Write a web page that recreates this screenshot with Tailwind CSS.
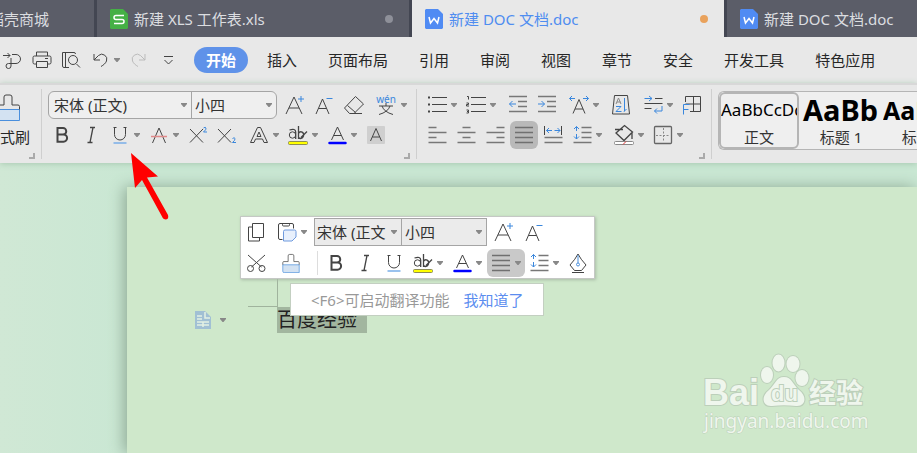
<!DOCTYPE html>
<html lang="zh-CN">
<head>
  <meta charset="UTF-8" />
  <meta name="viewport" content="width=device-width, initial-scale=1.0"/>
  <title>新建 DOC 文档.doc</title>
  <script src="https://cdn.jsdelivr.net/npm/@tailwindcss/browser@4"></script>
</head>
<body class="flex flex-col min-h-screen overflow-hidden bg-[#cbe8d3] font-['Noto_Sans','Noto_Sans_CJK_SC',sans-serif] text-[15px] leading-5 text-[#333] whitespace-nowrap">

  <!-- Icon set, all on a 28x28 grid -->
  <svg class="hidden" fill="none">
    <symbol id="down" viewBox="0 0 6 4"><path d="M0 0h6v1L3.500 4h-1L0 1z" fill="#888"/></symbol>
    <symbol id="export" viewBox="0 0 28 28"><path d="M4 9.500h7M8.500 7l2.500 2.500L8.500 12M13 8.500h4a4.500 4.500 0 0 1 0 9H9.500a2.500 2.500 0 1 0 2.500 2.500v-8"/></symbol>
    <symbol id="print" viewBox="0 0 28 28"><path d="M8.500 10V6h11v4M8.500 18H6.500a1.500 1.500 0 0 1-1.500-1.500v-5A1.500 1.500 0 0 1 6.500 10h15a1.500 1.500 0 0 1 1.500 1.500v5a1.500 1.500 0 0 1-1.500 1.500h-2M8.500 15.500h11v6h-11zM17 12.500h3"/></symbol>
    <symbol id="preview" viewBox="0 0 28 28"><path d="M12 21.500H7A1.500 1.500 0 0 1 5.500 20V6.500H17A1.500 1.500 0 0 1 18.500 8M8.500 6.500v15M19.500 18l3.500 3.500"/><circle cx="16" cy="14" r="4.500"/></symbol>
    <symbol id="undo" viewBox="0 0 28 28"><path d="M8 8v6h6M8 14l4.500-4.500a5 5 0 0 1 8 5.500c-1 2.500-3 4-5.500 5.500"/></symbol>
    <symbol id="redo" viewBox="0 0 28 28"><path d="M20 8v6h-6M20 14l-4.500-4.500a5 5 0 0 0-8 5.500c1 2.500 3 4 5.500 5.500"/></symbol>
    <symbol id="more" viewBox="0 0 28 28"><path d="M10 10.500h9M10.500 14l4 4 4-4"/></symbol>
    <symbol id="brush" viewBox="0 0 28 28"><path d="M2.500 16.500h23v11h-21q-2 0-2-2z" fill="#d3e2f2" stroke="#4a8fdd"/><path d="M2.500 16.500v-3q0-1.500 1.500-1.500h6V4q0-2 2-2h4q2 0 2 2v8h6q1.500 0 1.500 1.500v3"/></symbol>
    <symbol id="grow" viewBox="0 0 28 28"><path d="M6 23L14 6 22 23M9 17h10"/><path d="M18 8h6M21 5v6" stroke="#3a87dd"/></symbol>
    <symbol id="shrink" viewBox="0 0 28 28"><path d="M6 23L12.500 8 19 23M8.500 17.500h8"/><path d="M16.500 7.500h6" stroke="#3a87dd"/></symbol>
    <symbol id="eraser" viewBox="0 0 28 28"><path d="M9.500 22.500L4.500 17 15.500 5.500l8 7.500-9.500 9.500M7.500 14.500l8 7M9.500 22.500H22"/></symbol>
    <symbol id="alignleft" viewBox="0 0 28 28"><path d="M5.500 6.500h8M5.500 11.500h18M5.500 16.500h8M5.500 21.500h18" stroke="#777" stroke-width="1.500"/></symbol>
    <symbol id="aligncenter" viewBox="0 0 28 28"><path d="M10.500 6.500h8M5.500 11.500h18M10.500 16.500h8M5.500 21.500h18" stroke="#777" stroke-width="1.500"/></symbol>
    <symbol id="alignright" viewBox="0 0 28 28"><path d="M15.500 6.500h8M5.500 11.500h18M15.500 16.500h8M5.500 21.500h18" stroke="#777" stroke-width="1.500"/></symbol>
    <symbol id="justify" viewBox="0 0 28 28"><path d="M5 6.500h18M5 11.500h18M5 16.500h18M5 21.500h18" stroke="#707070" stroke-width="1.500"/></symbol>
    <symbol id="distribute" viewBox="0 0 28 28"><path d="M5.500 5v9M22.500 5v9"/><path d="M5.500 16.500h18M5.500 21.500h18" stroke="#777" stroke-width="1.500"/><path d="M13 9.500H7.500M10 7L7.500 9.500 10 12M15.500 9.500H21M18.500 7L21 9.500 18.500 12" stroke="#3a87dd"/></symbol>
    <symbol id="spacing" viewBox="0 0 28 28"><path d="M13.500 6.500h10M13.500 11.500h10M13.500 16.500h10M5.500 21.500h18" stroke="#777" stroke-width="1.500"/><path d="M8.500 5.500V10M6 8l2.500-2.500L11 8M8.500 13v5M6 15.500L8.500 18l2.500-2.500" stroke="#3a87dd"/></symbol>
    <symbol id="bold" viewBox="0 0 28 28"><path d="M9.500 7h5.500a3.200 3.200 0 0 1 0 6.500H9.500zM9.500 13.500h6a3.600 3.600 0 0 1 0 7.200h-6z" stroke="#444" stroke-width="2"/></symbol>
    <symbol id="italic" viewBox="0 0 28 28"><path d="M13 6.500h5M10.500 21.500h5M16 6.500l-3 15" stroke-width="1.300"/></symbol>
    <symbol id="under" viewBox="0 0 28 28"><path d="M7.500 6.500h3M17.500 6.500h3M8.500 6.500v7a5.500 5.500 0 0 0 11 0v-7"/><path d="M7.500 22h13" stroke="#78aee8" stroke-width="1.500"/></symbol>
    <symbol id="mark" viewBox="0 0 28 28"><rect x="4.500" y="20.500" width="19" height="3" rx="1" fill="#ff0" stroke="#8d8d55"/><circle cx="8.500" cy="14" r="3.200"/><path d="M5.500 9q6-2 6.200 2v7M14.500 5v13M14.500 12.500c2-3.500 6-1 5 2.500-1 3-3.500 3-5 1.500M17 16.500l6-6" stroke-width="1.300"/></symbol>
    <symbol id="color" viewBox="0 0 28 28"><path d="M8.500 19L14.500 6l6 13M11 14.500h7"/><path d="M6.500 22h16" stroke="#00f" stroke-width="2.500" stroke-linecap="round"/></symbol>
  </svg>

  <!-- Document tabs -->
  <nav class="flex h-[37px] shrink-0 bg-[#5b5d68] text-[#dcdde0]">
    <button class="flex w-[94px] shrink-0 items-center justify-end pr-[45px]">稻壳商城</button>
    <button class="flex w-[315px] shrink-0 items-center gap-1.5 border-l-[3px] border-[#434652] pl-[13px] pr-4">
      <svg class="w-[18px] h-5" viewBox="0 0 18 20" fill="none"><path d="M1 0h12l5 5v14l-1 1H1l-1-1V1z" fill="#45b045"/><path d="M14 6.500H6A1.800 1.800 0 0 0 6 10.500h6a1.800 1.800 0 0 1 0 4H4" stroke="#fff" stroke-width="1.500"/></svg>
      新建 XLS 工作表.xls
      <span class="ml-auto size-2 rounded-full bg-[#8e9099]"></span>
    </button>
    <button class="flex w-[315px] shrink-0 items-center gap-1.5 border-l-[3px] border-[#434652] bg-[#e8e8e8] pl-[13px] pr-4 text-[#4f8df0]">
      <svg class="w-[18px] h-5" viewBox="0 0 18 20" fill="none"><path d="M1 0h12l5 5v14l-1 1H1l-1-1V1z" fill="#508bf3"/><path d="M4 8l1.500 6L9 9.500l3.500 4.500L14 8" stroke="#fff" stroke-width="1.500"/></svg>
      新建 DOC 文档.doc
      <span class="ml-auto size-2 rounded-full bg-[#e9a25c]"></span>
    </button>
    <button class="flex min-w-0 flex-1 items-center gap-1.5 border-l-[3px] border-[#434652] pl-[13px]">
      <svg class="w-[18px] h-5" viewBox="0 0 18 20" fill="none"><path d="M1 0h12l5 5v14l-1 1H1l-1-1V1z" fill="#508bf3"/><path d="M4 8l1.500 6L9 9.500l3.500 4.500L14 8" stroke="#fff" stroke-width="1.500"/></svg>
      新建 DOC 文档.doc
    </button>
  </nav>

  <!-- Quick access + menu -->
  <div class="flex h-[46px] shrink-0 items-center bg-[#e8e8e8] stroke-[#444]">
    <div class="-ml-px mr-[11px] flex shrink-0 items-center">
      <button title="输出" class="w-[29px]"><svg class="size-7 fill-none"><use href="#export"/></svg></button>
      <button title="打印" class="w-[29px]"><svg class="size-7 fill-none"><use href="#print"/></svg></button>
      <button title="打印预览" class="w-[29px]"><svg class="size-7 fill-none"><use href="#preview"/></svg></button>
      <button title="撤销" class="flex w-[39px] items-center"><svg class="size-7 fill-none"><use href="#undo"/></svg><svg class="w-1.5 h-1 stroke-none"><use href="#down"/></svg></button>
      <button title="恢复" class="w-[29px]"><svg class="size-7 fill-none stroke-[#bbb]"><use href="#redo"/></svg></button>
      <button title="更多" class="w-[29px]"><svg class="size-7 fill-none"><use href="#more"/></svg></button>
    </div>
    <button class="h-[26px] w-[54px] shrink-0 rounded-full bg-[#5f92e9] font-bold text-white">开始</button>
    <div class="ml-[19px] flex gap-[31px] text-[#262626]">
      <button>插入</button>
      <button>页面布局</button>
      <button>引用</button>
      <button>审阅</button>
      <button>视图</button>
      <button>章节</button>
      <button>安全</button>
      <button>开发工具</button>
      <button>特色应用</button>
    </div>
  </div>

  <!-- Ribbon -->
  <div class="relative z-10 flex h-20 shrink-0 border-t-2 border-[#d8d8d8] bg-[#e8e8e8] stroke-[#444] shadow-[0_1px_6px_#a9c9b2]">
    <div class="relative w-[41px] shrink-0 pt-2">
      <button class="flex w-[30px] flex-col items-end gap-1.5 text-[#262626]">
        <svg class="mr-2 size-7 fill-none"><use href="#brush"/></svg>
        格式刷
      </button>
      <span class="absolute bottom-1 right-1.5 size-1.5 border-b-2 border-r-2 border-[#aaa]"></span>
    </div>
    <div class="my-1 w-px bg-[#cfcfcf]"></div>

    <div class="relative flex w-[374px] shrink-0 flex-col gap-0.5 pl-1.5 pt-1.5">
      <div class="flex h-7 items-center">
        <div class="mr-[3px] flex h-7 w-[229px] rounded-md border border-[#a5a5a5] bg-[#efefef]">
          <label class="relative flex w-[143px] items-center border-r border-[#a5a5a5]">
            <select aria-label="字体" class="w-full appearance-none pl-[5px] outline-none"><option>宋体 (正文)</option></select>
            <svg class="absolute right-1 w-1.5 h-1 stroke-none"><use href="#down"/></svg>
          </label>
          <label class="relative flex flex-1 items-center">
            <select aria-label="字号" class="w-full appearance-none pl-[3px] outline-none"><option>小四</option></select>
            <svg class="absolute right-1 w-1.5 h-1 stroke-none"><use href="#down"/></svg>
          </label>
        </div>
        <button title="增大字号" class="w-[30px]"><svg class="size-7 fill-none"><use href="#grow"/></svg></button>
        <button title="减小字号" class="w-[30px]"><svg class="size-7 fill-none"><use href="#shrink"/></svg></button>
        <button title="清除格式" class="w-[31px]"><svg class="size-7 fill-none"><use href="#eraser"/></svg></button>
        <button title="拼音指南" class="flex w-[39px] items-center">
          <span class="flex w-[30px] flex-col items-center text-[10px] leading-[8px] text-[#3a87dd]">wén<svg class="w-4 h-3 fill-none stroke-[#444]" viewBox="0 0 16 12"><path d="M8 0v3M1 3h14M4 3q2 6 11 8.500M12 3q-2 6-11 8.500"/></svg></span>
          <svg class="w-1.5 h-1 stroke-none"><use href="#down"/></svg>
        </button>
      </div>
      <div class="flex h-7 items-center gap-[3px]">
        <div class="flex">
          <button title="加粗" class="w-[29px]"><svg class="size-7 fill-none"><use href="#bold"/></svg></button>
          <button title="倾斜" class="w-[29px]"><svg class="size-7 fill-none"><use href="#italic"/></svg></button>
          <button title="下划线" class="flex w-[39px] items-center"><svg class="size-7 fill-none"><use href="#under"/></svg><svg class="w-1.5 h-1 stroke-none"><use href="#down"/></svg></button>
          <button title="删除线" class="flex w-[39px] items-center"><svg class="size-7 fill-none" viewBox="0 0 28 28"><path d="M7.500 22L14 7l6.500 15"/><path d="M6 15.500h16" stroke="#e08a8a" stroke-width="1.500"/></svg><svg class="w-1.5 h-1 stroke-none"><use href="#down"/></svg></button>
          <button title="上标" class="w-[29px]"><svg class="size-7 fill-none" viewBox="0 0 28 28"><path d="M6 8l13 13.500M19 8L6 21.500"/><path d="M19.500 7q2-1.500 2.500 0t-2.500 4h3.500" stroke="#3a87dd"/></svg></button>
          <button title="下标" class="w-[29px]"><svg class="size-7 fill-none" viewBox="0 0 28 28"><path d="M5 8l13 13.500M18 8L5 21.500"/><path d="M19.500 17.500q2-1.500 2.500 0t-2.500 4H23" stroke="#3a87dd"/></svg></button>
        </div>
        <div class="flex">
          <button title="文字效果" class="flex w-[39px] items-center"><svg class="size-7 fill-none" viewBox="0 0 28 28"><path d="M5.500 21.500L12.500 6.500h3l7 15h-3.500l-1.500-3.500h-7L9 21.500zM14 11l-2 4.500h4z"/></svg><svg class="w-1.5 h-1 stroke-none"><use href="#down"/></svg></button>
          <button title="突出显示" class="flex w-[39px] items-center"><svg class="size-7 fill-none"><use href="#mark"/></svg><svg class="w-1.5 h-1 stroke-none"><use href="#down"/></svg></button>
          <button title="字体颜色" class="flex w-[39px] items-center"><svg class="size-7 fill-none"><use href="#color"/></svg><svg class="w-1.5 h-1 stroke-none"><use href="#down"/></svg></button>
          <button title="字符底纹" class="w-[29px]"><svg class="size-7 fill-none" viewBox="0 0 28 28"><rect x="5" y="5" width="18" height="18" rx="1" fill="#cfcfcf" stroke="none"/><path d="M8.500 20L14 7.500 19.500 20M10.500 16h7"/></svg></button>
        </div>
      </div>
      <span class="absolute bottom-1 right-1.5 size-1.5 border-b-2 border-r-2 border-[#aaa]"></span>
    </div>
    <div class="my-1 w-px bg-[#cfcfcf]"></div>

    <div class="relative flex w-[294px] shrink-0 flex-col gap-0.5 pl-1.5 pt-1.5">
      <div class="flex h-7 items-center gap-[3px]">
        <div class="flex">
          <button title="项目符号" class="flex w-[39px] items-center"><svg class="size-7 fill-none" viewBox="0 0 28 28"><path d="M9 6.500h15M9 13.500h15M9 20.500h15"/><path d="M5 6.500h2M5 13.500h2M5 20.500h2" stroke-width="2"/></svg><svg class="w-1.5 h-1 stroke-none"><use href="#down"/></svg></button>
          <button title="编号" class="flex w-[39px] items-center"><svg class="size-7 fill-none" viewBox="0 0 28 28"><path d="M9 6.500h15M9 13.500h15M9 20.500h15M5 5.500h1.500v3M4.500 12h2v1.500h-2V15h2.500M4.500 19h2v1.500h-1.500h1.500V22h-2"/></svg><svg class="w-1.5 h-1 stroke-none"><use href="#down"/></svg></button>
        </div>
        <div class="flex">
          <button title="减少缩进" class="w-[29px]"><svg class="size-7 fill-none" viewBox="0 0 28 28"><path d="M5 5.500h18M14 10.500h9M14 15.500h9M5 20.500h18" stroke="#777" stroke-width="1.500"/><path d="M12 13H5.500M8.500 10l-3 3 3 3" stroke="#3a87dd"/></svg></button>
          <button title="增加缩进" class="w-[29px]"><svg class="size-7 fill-none" viewBox="0 0 28 28"><path d="M5 5.500h18M14 10.500h9M14 15.500h9M5 20.500h18" stroke="#777" stroke-width="1.500"/><path d="M5 13h6.500M8.500 10l3 3-3 3" stroke="#3a87dd"/></svg></button>
        </div>
        <button title="中文版式" class="flex w-[39px] items-center"><svg class="size-7 fill-none" viewBox="0 0 28 28"><path d="M8 22.500L14 8.500l6 14M10 18h8"/><path d="M10 7.500H4.500M7 5L4.500 7.500 7 10M18 7.500h5.500M21 5l2.500 2.500L21 10" stroke="#3a87dd"/></svg><svg class="w-1.5 h-1 stroke-none"><use href="#down"/></svg></button>
        <button title="排序" class="w-[29px]"><svg class="size-7 fill-none" viewBox="0 0 28 28"><path d="M7.500 4.500h13l2 18.500h-17z" stroke-linejoin="round"/><path d="M9 13l2.500-6L14 13M10 11h3.500" stroke="#888"/><path d="M9 15.500h5L9 20.500h5.500M17.500 7v13.500M17 20.500l2.500-2.500" stroke="#3a87dd"/></svg></button>
        <div class="flex">
          <button title="换行" class="flex w-[39px] items-center"><svg class="size-7 fill-none" viewBox="0 0 28 28"><path d="M16 7.500h7.500M5.500 12.500h18M5.500 17.500h7"/><path d="M5.500 7.500h7.500M10 5l3 2.500-3 2.500M23 15v5h-7.500M18 17.500L15.500 20l2.500 2.500" stroke="#3a87dd"/></svg><svg class="w-1.5 h-1 stroke-none"><use href="#down"/></svg></button>
          <button title="制表位" class="w-[29px]"><svg class="size-7 fill-none" viewBox="0 0 28 28"><path d="M7.500 11V5.500h15v15H12M7.500 13h15M15.500 5.500v15"/><path d="M5.500 23.500v-10h6M5.500 18.500h5" stroke="#3a87dd"/></svg></button>
        </div>
      </div>
      <div class="flex h-7 items-center gap-[3px]">
        <div class="flex">
          <button title="左对齐" class="w-[29px]"><svg class="size-7 fill-none"><use href="#alignleft"/></svg></button>
          <button title="居中" class="w-[29px]"><svg class="size-7 fill-none"><use href="#aligncenter"/></svg></button>
          <button title="右对齐" class="w-[29px]"><svg class="size-7 fill-none"><use href="#alignright"/></svg></button>
          <button title="两端对齐" class="w-[29px]"><svg class="size-7 rounded-md bg-[#b9b9b9] fill-none"><use href="#justify"/></svg></button>
          <button title="分散对齐" class="w-[29px]"><svg class="size-7 fill-none"><use href="#distribute"/></svg></button>
          <button title="行距" class="flex w-[39px] items-center"><svg class="size-7 fill-none"><use href="#spacing"/></svg><svg class="w-1.5 h-1 stroke-none"><use href="#down"/></svg></button>
        </div>
        <div class="flex">
          <button title="底纹颜色" class="flex w-[39px] items-center"><svg class="size-7 fill-none" viewBox="0 0 28 28"><path d="M5 8.500h8M6 12l8.500-7.500 8 6.500-8.500 8.500zM22 12v6" stroke-width="1.300"/><rect x="4.500" y="20.500" width="19" height="3" rx="1" fill="#fff" stroke="#888"/><path d="M13 23.500l3-3" stroke="#e03030"/></svg><svg class="w-1.5 h-1 stroke-none"><use href="#down"/></svg></button>
          <button title="边框" class="flex w-[39px] items-center"><svg class="size-7 fill-none" viewBox="0 0 28 28"><rect x="5.500" y="5.500" width="17" height="17" rx="1" stroke="#666" stroke-width="1.300"/><path d="M14.500 7v14M7 14.500h14" stroke="#888" stroke-dasharray="2 1.500"/></svg><svg class="w-1.5 h-1 stroke-none"><use href="#down"/></svg></button>
        </div>
      </div>
      <span class="absolute bottom-1 right-1.5 size-1.5 border-b-2 border-r-2 border-[#aaa]"></span>
    </div>
    <div class="my-1 w-px bg-[#cfcfcf]"></div>

    <!-- Style gallery -->
    <div class="ml-1.5 mt-1.5 flex h-[59px] min-w-0 flex-1 gap-0.5 overflow-hidden rounded-l-md border border-r-0 border-[#b5b5b5] bg-[#efefef]">
      <button class="flex w-20 shrink-0 flex-col items-center justify-between overflow-hidden rounded-md border-2 border-[#b5b5b5]">
        <span class="flex h-8 w-full items-center overflow-hidden text-[17px] text-black">AaBbCcDd</span>
        <span>正文</span>
      </button>
      <button class="flex w-20 shrink-0 flex-col items-center justify-between pb-0.5">
        <span class="flex h-9 w-full items-center overflow-hidden pl-0.5 text-[29px] leading-9 font-bold text-black">AaBb</span>
        <span>标题 1</span>
      </button>
      <button class="flex w-20 shrink-0 flex-col items-center justify-between pb-0.5">
        <span class="flex h-9 w-full items-center overflow-hidden text-[25px] leading-9 font-bold text-black">AaBbC</span>
        <span>标题 2</span>
      </button>
    </div>
  </div>

  <!-- Document -->
  <main class="relative flex flex-1 flex-col bg-linear-to-r from-[#d0e8d5] to-[#c9e7d3] to-15% pl-[127px] pt-6">
    <div class="flex-1 bg-[#cfe8cb] pl-[68px] pt-[92px] shadow-[-3px_0_14px_#90ab96]">
      <div class="flex">
        <div class="w-[53px] shrink-0"></div>
        <div class="h-7 w-[30px] border-b border-r border-[#a0b39d]"></div>
      </div>
      <div class="flex items-center">
        <svg class="w-4 h-[18px] fill-none" viewBox="0 0 16 18"><path d="M0 0h10l6 6v12H0z" fill="#a1c0d4"/><path d="M10 1v6h5M2 5h5M2 8h5M2 11h12M2 14h12M8 11v5" stroke="#e4f1e4" stroke-width="1.500"/></svg>
        <svg class="ml-[9px] w-1.5 h-1"><use href="#down"/></svg>
        <p class="ml-[51px] h-[26px] w-[90px] bg-[#a2b69f] text-[20px] leading-[26px] text-[#222]">百度经验</p>
      </div>
    </div>

    <!-- Red pointer -->
    <svg class="absolute left-[130px] top-[-11px] z-20 h-[68px] w-10" viewBox="0 0 40 68"><path d="M1 1l27 23.500-11 1 21 37.500q1 4-2 4.500-3 0-4-3L12 28l-7 8z" fill="#f00"/></svg>

    <!-- Mini toolbar -->
    <div class="absolute left-[240px] top-[53px] flex w-[355px] flex-col gap-[3px] border border-[#c5c8c5] bg-white py-px stroke-[#444] shadow-[1px_1px_3px_#a8bca6]">
      <div class="flex h-7 items-center">
        <button title="复制" class="w-[31px]"><svg class="size-7 fill-none" viewBox="0 0 28 28"><path d="M11.500 5.500h11v14h-11zM11.500 9h-4v14h11v-3.500"/></svg></button>
        <button title="粘贴" class="flex w-[42px] items-center"><svg class="size-7 fill-none" viewBox="0 0 28 28"><path d="M10.500 21.500H8Q6.500 21.500 6.500 20V7Q6.500 5.500 8 5.500H20q1.500 0 1.500 1.500v3.500"/><rect x="10.500" y="5.500" width="7" height="2.500" rx="1"/><path d="M11.500 13.500q0-1.500 1.500-1.500h9.500q1.500 0 1.500 1.500V19l-4 4h-8.500z" fill="#e8f0fc" stroke="#6f9ade"/></svg><svg class="ml-px w-1.5 h-1 stroke-none"><use href="#down"/></svg></button>
        <div class="mr-0.5 flex h-7 w-[173px] border border-[#a5a5a5] bg-[#ebebeb]">
          <label class="relative flex w-[87px] items-center border-r border-[#a5a5a5] pr-2.5">
            <select aria-label="字体" class="w-full appearance-none pl-0.5 outline-none"><option>宋体 (正文</option></select>
            <svg class="absolute right-1 w-1.5 h-1 stroke-none"><use href="#down"/></svg>
          </label>
          <label class="relative flex flex-1 items-center">
            <select aria-label="字号" class="w-full appearance-none pl-[3px] outline-none"><option>小四</option></select>
            <svg class="absolute right-1 w-1.5 h-1 stroke-none"><use href="#down"/></svg>
          </label>
        </div>
        <button title="增大字号" class="w-[31px]"><svg class="size-7 fill-none"><use href="#grow"/></svg></button>
        <button title="减小字号" class="w-[31px]"><svg class="size-7 fill-none"><use href="#shrink"/></svg></button>
      </div>
      <div class="flex h-7 items-center">
        <button title="剪切" class="w-[31px]"><svg class="size-7 fill-none" viewBox="0 0 28 28"><path d="M7 6l13.500 12M24 6L10.500 18"/><circle cx="9.500" cy="19.500" r="3"/><circle cx="21" cy="19.500" r="3"/></svg></button>
        <button title="格式刷" class="flex w-[38px] justify-center"><svg class="size-5 fill-none"><use href="#brush"/></svg></button>
        <div class="ml-[7px] mr-1 h-6 w-px bg-[#ddd]"></div>
        <button title="加粗" class="w-[29px]"><svg class="size-7 fill-none"><use href="#bold"/></svg></button>
        <button title="倾斜" class="w-[29px]"><svg class="size-7 fill-none"><use href="#italic"/></svg></button>
        <button title="下划线" class="w-[29px]"><svg class="size-7 fill-none"><use href="#under"/></svg></button>
        <button title="突出显示" class="flex w-[39px] items-center"><svg class="size-7 fill-none"><use href="#mark"/></svg><svg class="w-1.5 h-1 stroke-none"><use href="#down"/></svg></button>
        <button title="字体颜色" class="flex w-[39px] items-center"><svg class="size-7 fill-none"><use href="#color"/></svg><svg class="w-1.5 h-1 stroke-none"><use href="#down"/></svg></button>
        <button title="对齐" class="flex w-[38px] items-center rounded-md bg-[#c9c9c9]"><svg class="size-7 fill-none"><use href="#justify"/></svg><svg class="w-1.5 h-1 stroke-none"><use href="#down"/></svg></button>
        <button title="行距" class="flex w-[39px] items-center"><svg class="size-7 fill-none"><use href="#spacing"/></svg><svg class="w-1.5 h-1 stroke-none"><use href="#down"/></svg></button>
        <button title="批注" class="w-[29px]"><svg class="size-7 fill-none" viewBox="0 0 28 28"><path d="M14 5q2.500 5 8 11l-4.500 5.500h-7L6 16q5.500-6 8-11zM8 23.500h12"/><path d="M14 6v8" stroke="#4a8fdd"/><circle cx="14" cy="15.500" r="1.500" stroke="#4a8fdd"/></svg></button>
      </div>
    </div>

    <!-- Translate hint -->
    <div class="absolute left-[290px] top-[120px] flex h-[33px] w-[254px] items-center gap-3.5 border border-[#c3cfc1] bg-white pl-5 text-[#999]">
      <span>&lt;F6&gt;可启动翻译功能</span>
      <a href="#" class="text-[#5b8def]">我知道了</a>
    </div>

    <!-- Watermark -->
    <svg class="absolute bottom-4 right-[45px] h-[84px] w-[170px] fill-[#eff6ed] stroke-[#bccfba] [paint-order:stroke]" viewBox="8 0 170 84" stroke-width="2">
      <text x="9" y="52" font-size="36" class="font-['Liberation_Sans'] font-bold">Bai</text>
      <ellipse cx="73" cy="22" rx="6" ry="8"/><ellipse cx="84.500" cy="10" rx="6" ry="8.500"/><ellipse cx="99" cy="11" rx="6.500" ry="8"/><ellipse cx="108" cy="25" rx="6.500" ry="8"/>
      <path d="M90 24c8 0 9 8 15 13 9 7 6 17-3 16-8-1-16-1-24 0-9 1-12-9-3-16 6-5 7-13 15-13z"/>
      <text x="77" y="48" font-size="22" class="font-['Liberation_Sans'] font-bold">du</text>
      <text x="115" y="50" font-size="27" class="font-['Noto_Sans_CJK_SC'] font-bold">经验</text>
      <text x="10" y="75" font-size="19" stroke-width="1" class="font-['Noto_Sans']">jingyan.baidu.com</text>
    </svg>
  </main>

</body>
</html>
